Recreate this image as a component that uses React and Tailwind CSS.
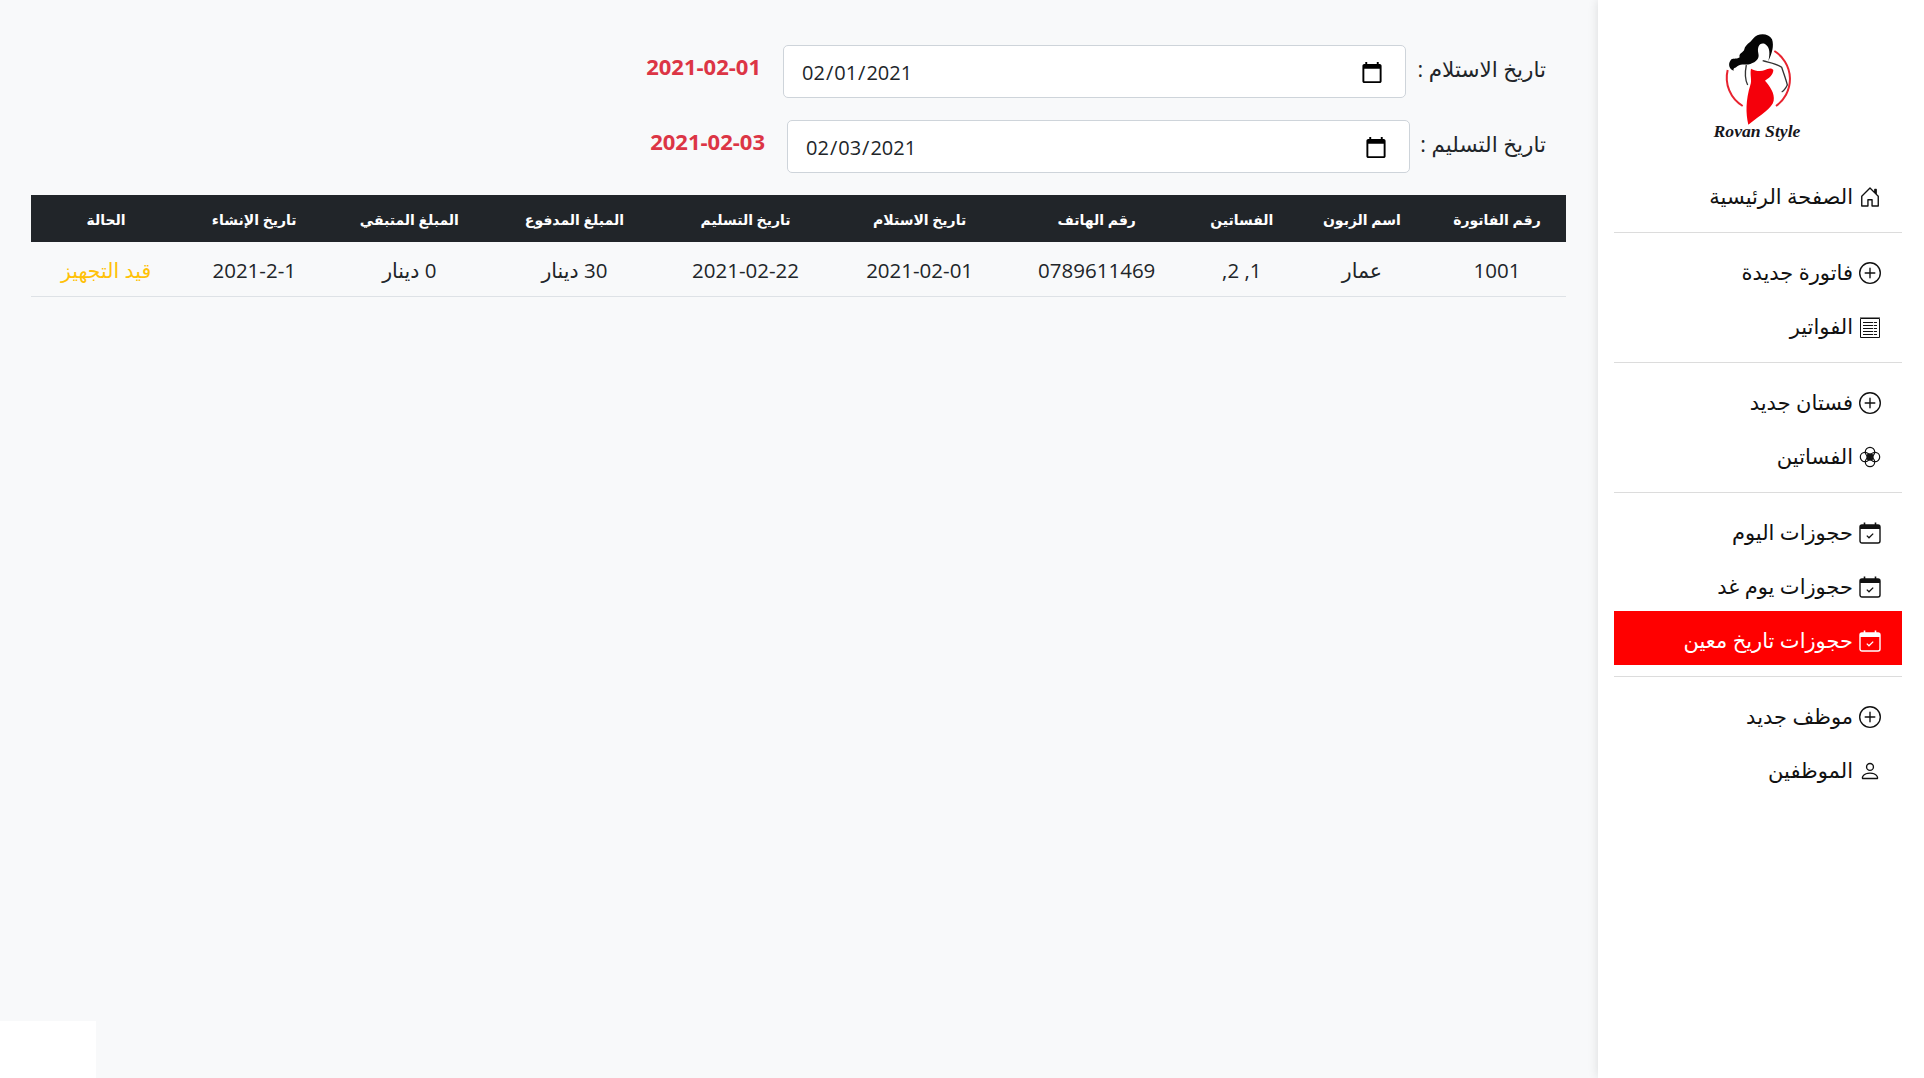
import React from 'react';
import { BsHouseDoor, BsPlusCircle, BsPerson } from 'react-icons/bs';

const FONT = "font-['Open_Sans','DejaVu_Sans',sans-serif]";

// الشعار
const Logo = () => (
  <svg width="130" height="130" viewBox="0 0 390 390" className="block">
    <path d="M250 93 A99 99 0 0 1 255 258" fill="none" stroke="#e8232f" strokeWidth="6" />
    <path d="M155 258 A99 99 0 0 1 110 150" fill="none" stroke="#e8232f" strokeWidth="6" />
    <path d="M186 56 C200 38 232 38 243 58 C250 78 243 100 232 124 C237 102 238 82 222 72 C205 66 198 82 202 100 C206 116 196 126 178 132 C165 136 152 130 140 138 C132 146 126 142 128 152 C116 148 110 134 118 122 C124 112 135 120 146 112 C142 100 158 98 160 88 C164 72 176 70 186 56 Z" fill="#050505" />
    <path d="M215 122 C235 128 260 132 272 142 C278 160 285 178 289 195 C284 205 280 212 272 216" fill="none" stroke="#333" strokeWidth="4" />
    <path d="M166 135 C162 155 160 175 170 195" fill="none" stroke="#333" strokeWidth="4" />
    <path d="M180 146 C192 152 208 156 222 150 C230 146 240 142 247 150 C247 165 232 176 222 182 C236 198 252 220 248 242 C244 264 212 282 172 314 C164 280 164 240 178 195 C184 180 176 165 180 146 Z" fill="#f5000b" />
    <text x="198" y="352" textAnchor="middle" fontFamily="'Liberation Serif', serif" fontStyle="italic" fontWeight="700" fontSize="53" fill="#16161c">Rovan Style</text>
  </svg>
);

const NotepadIcon = () => (
  <svg width="22" height="22" viewBox="0 0 22 22" fill="none" stroke="currentColor">
    <path d="M1.5 2.5h19v19h-19z" />
    <path d="M1.5 1.5h19" strokeDasharray="1 1" />
    <path d="M4 6.5h14M4 9.5h14M4 12.5h14M4 15.5h14M4 18.5h14" strokeWidth="1.2" />
    <path d="M14.5 5v15" stroke="#fff" strokeWidth="0.8" />
  </svg>
);

const FlowerIcon = () => (
  <svg width="22" height="22" viewBox="0 0 22 22" fill="none" stroke="currentColor" strokeWidth="1.2">
    <circle cx="11" cy="6" r="4.7" />
    <circle cx="11" cy="16" r="4.7" />
    <circle cx="6" cy="11" r="4.7" />
    <circle cx="16" cy="11" r="4.7" />
    <circle cx="11" cy="11" r="2.6" strokeWidth="2.2" />
  </svg>
);

const CalendarIcon = () => (
  <svg width="22" height="22" viewBox="0 0 22 22" fill="none" stroke="currentColor" strokeWidth="1.4">
    <rect x="1" y="3" width="20" height="18" rx="2" />
    <rect x="1" y="3" width="20" height="4" fill="currentColor" stroke="none" />
    <path d="M5.5 0.5v3M16.5 0.5v3" strokeWidth="1.6" />
    <path d="M7.8 13.6l2.2 2.2 4.2-4.2" strokeWidth="1.3" />
  </svg>
);

const menuGroups = [
  [{ label: 'الصفحة الرئيسية', icon: BsHouseDoor }],
  [
    { label: 'فاتورة جديدة', icon: BsPlusCircle },
    { label: 'الفواتير', icon: NotepadIcon },
  ],
  [
    { label: 'فستان جديد', icon: BsPlusCircle },
    { label: 'الفساتين', icon: FlowerIcon },
  ],
  [
    { label: 'حجوزات اليوم', icon: CalendarIcon },
    { label: 'حجوزات يوم غد', icon: CalendarIcon },
    { label: 'حجوزات تاريخ معين', icon: CalendarIcon, active: true },
  ],
  [
    { label: 'موظف جديد', icon: BsPlusCircle },
    { label: 'الموظفين', icon: BsPerson },
  ],
];

const columns = [
  { title: 'رقم الفاتورة', value: '1001', width: 'w-[138px]' },
  { title: 'اسم الزبون', value: 'عمار', width: 'w-[132px]' },
  { title: 'الفساتين', value: '1, 2,', width: 'w-[108px]' },
  { title: 'رقم الهاتف', value: '0789611469', width: 'w-[182px]' },
  { title: 'تاريخ الاستلام', value: '2021-02-01', width: 'w-[172px]' },
  { title: 'تاريخ التسليم', value: '2021-02-22', width: 'w-[176px]' },
  { title: 'المبلغ المدفوع', value: '30 دينار', width: 'w-[166px]' },
  { title: 'المبلغ المتبقي', value: '0 دينار', width: 'w-[164px]' },
  { title: 'تاريخ الإنشاء', value: '2021-2-1', width: 'w-[146px]' },
  { title: 'الحالة', value: 'قيد التجهيز', width: 'w-[150px]', className: 'text-[#ffc107]' },
];

const DateRow = ({ label, labelWidth, value }) => (
  <div className="flex items-start h-[53px] mb-[22px]">
    <label className={`${labelWidth} whitespace-nowrap text-[21.5px] leading-[30px] text-[#212529] ml-[11px] mt-[9px]`}>{label}</label>
    <input
      type="date"
      dir="ltr"
      defaultValue={value}
      className="w-[623px] h-[53px] bg-white border border-[#ced4da] rounded-[5px] pl-[17px] pr-[21px] pt-[2px] text-[20px] text-[#212529] [&::-webkit-calendar-picker-indicator]:w-[24px] [&::-webkit-calendar-picker-indicator]:h-[24px] [&::-webkit-calendar-picker-indicator]:p-0 [&::-webkit-calendar-picker-indicator]:m-0"
    />
    <span className="text-[22px] leading-[30px] font-bold text-[#dc3545] mr-[22px] mt-[6px]">{value}</span>
  </div>
);

export default function App() {
  return (
    <div dir="rtl" className={`${FONT} relative flex h-screen overflow-hidden bg-[#f8f9fa]`}>
      {/* القائمة الجانبية */}
      <aside className="w-[326px] shrink-0 bg-white shadow-[0_0_10px_rgba(0,0,0,0.12)] pr-[22px] pl-[16px] pt-[20px] text-[21px] text-[#111]">
        <div className="flex justify-center pr-[4px] h-[147px]">
          <Logo />
        </div>
        {menuGroups.map((group, i) => (
          <div key={i}>
            {i > 0 && <div className="h-[1px] bg-[#dcdcdc] mt-[11px] mb-[10px]" />}
            {group.map((item) => {
              const Icon = item.icon;
              return (
                <div
                  key={item.label}
                  className={`flex items-center gap-[6px] h-[54px] pr-[21px] pt-[5px] ${item.active ? 'bg-[#ff0000] text-white' : ''}`}
                >
                  <span className="w-[22px] h-[22px] flex items-center justify-center text-[22px]">
                    <Icon />
                  </span>
                  <span>{item.label}</span>
                </div>
              );
            })}
          </div>
        ))}
      </aside>

      {/* المحتوى */}
      <main className="flex-1 pt-[45px] pr-[32px] pl-[31px]">
        <div className="pr-[20px]">
          <DateRow label="تاريخ الاستلام :" labelWidth="w-[129px]" value="2021-02-01" />
          <DateRow label="تاريخ التسليم :" labelWidth="w-[125px]" value="2021-02-03" />
        </div>
        <table className="w-full table-fixed border-collapse text-center">
          <thead>
            <tr className="h-[47px] bg-[#212529] text-white text-[14px] font-bold">
              {columns.map((c) => (
                <th key={c.title} className={`${c.width} pt-[1px]`}>{c.title}</th>
              ))}
            </tr>
          </thead>
          <tbody>
            <tr className="h-[54px] border-b border-[#dee2e6] text-[20.5px] text-[#212529]">
              {columns.map((c) => (
                <td key={c.title} className={`pt-[4px] ${c.className || ''}`}>{c.value}</td>
              ))}
            </tr>
          </tbody>
        </table>
      </main>

      {/* المربع الأبيض أسفل الصفحة */}
      <div className="absolute left-0 bottom-0 w-[96px] h-[57px] bg-white" />
    </div>
  );
}
